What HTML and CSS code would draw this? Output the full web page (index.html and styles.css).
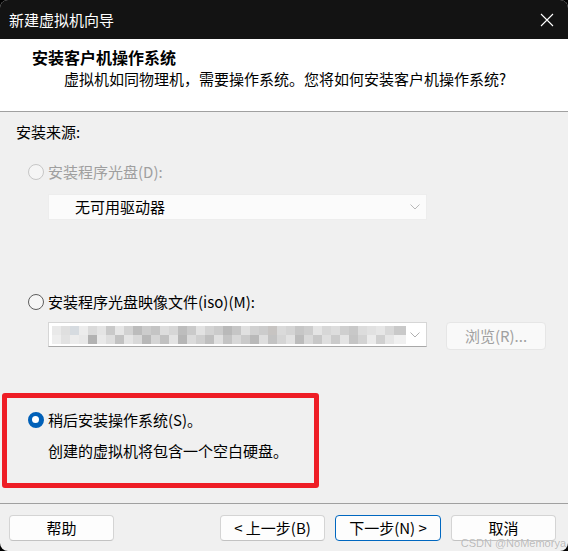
FILE: index.html
```html
<!DOCTYPE html>
<html lang="zh-CN">
<head>
<meta charset="utf-8">
<title>新建虚拟机向导</title>
<link rel="stylesheet" href="styles.css">
</head>
<body>
<div class="window">
  <div class="titlebar">
    <span class="title">新建虚拟机向导</span>
    <svg class="close" width="14" height="14" viewBox="0 0 14 14"><path d="M1 1 L13 13 M13 1 L1 13" stroke="#ffffff" stroke-width="1.1" fill="none"/></svg>
  </div>
  <div class="header">
    <div class="h-title">安装客户机操作系统</div>
    <div class="h-sub">虚拟机如同物理机，需要操作系统。您将如何安装客户机操作系统?</div>
  </div>
  <div class="content">
    <div class="src-label">安装来源:</div>
    <div class="radio-row row-disc disabled">
      <span class="radio radio-off-disabled"></span>
      <span class="rlabel">安装程序光盘(D):</span>
    </div>
    <div class="combo combo-disabled">
      <span class="combo-text">无可用驱动器</span>
      <svg class="chev" width="10" height="6" viewBox="0 0 10 6"><path d="M0.5 0.5 L5 5 L9.5 0.5" stroke="#b8b8b8" stroke-width="1" fill="none"/></svg>
    </div>
    <div class="radio-row row-iso">
      <span class="radio radio-off"></span>
      <span class="rlabel">安装程序光盘映像文件(iso)(M):</span>
    </div>
    <div class="iso-row">
      <div class="combo combo-iso">
        <div class="mosaic"></div>
        <svg class="chev" width="10" height="6" viewBox="0 0 10 6"><path d="M0.5 0.5 L5 5 L9.5 0.5" stroke="#b0b0b0" stroke-width="1" fill="none"/></svg>
      </div>
      <div class="btn btn-disabled browse">浏览(R)...</div>
    </div>
    <div class="redbox">
      <div class="radio-row row-later">
        <span class="radio radio-on"></span>
        <span class="rlabel">稍后安装操作系统(S)。</span>
      </div>
      <div class="later-desc">创建的虚拟机将包含一个空白硬盘。</div>
    </div>
  </div>
  <div class="footer">
    <div class="btn help">帮助</div>
    <div class="btn prev">&lt; 上一步(B)</div>
    <div class="btn next">下一步(N) &gt;</div>
    <div class="btn cancel">取消</div>
    <span class="watermark">CSDN @NoMemorya</span>
  </div>
</div>
</body>
</html>
```

FILE: styles.css
```css
* { box-sizing: border-box; }
html, body { margin: 0; padding: 0; background: #000; }
body {
  font-family: "Noto Sans CJK SC", "Noto Sans", sans-serif;
  font-size: 15px;
  color: #000;
}
.window {
  width: 568px;
  height: 551px;
  display: flex;
  flex-direction: column;
  background: #f0f0f0;
  border-radius: 8px;
  overflow: hidden;
  position: relative;
}
.titlebar {
  height: 39px;
  background: #131313;
  display: flex;
  align-items: center;
  padding-left: 9px;
  padding-right: 14px;
  flex-shrink: 0;
}
.title {
  color: #ffffff;
  font-size: 15px;
  line-height: 20px;
  flex: 1;
}
.close { display: block; }
.header {
  background: #ffffff;
  height: 73px;
  border-bottom: 1px solid #a0a0a0;
  padding-top: 8px;
  flex-shrink: 0;
}
.h-title {
  font-size: 16px;
  font-weight: 700;
  line-height: 20px;
  padding-left: 32px;
}
.h-sub {
  font-size: 15px;
  line-height: 20px;
  padding-left: 64px;
  margin-top: 2px;
}
.content {
  flex: 1;
  padding-top: 10px;
  display: flex;
  flex-direction: column;
  align-items: flex-start;
}
.src-label {
  line-height: 20px;
  padding-left: 16px;
}
.radio-row {
  display: flex;
  align-items: center;
  height: 20px;
  padding-left: 28px;
}
.rlabel { line-height: 20px; margin-left: 4px; }
.disabled .rlabel { color: #9f9f9f; }
.row-disc { margin-top: 20px; }
.row-iso { margin-top: 72px; }
.radio {
  width: 16px;
  height: 16px;
  border-radius: 50%;
  flex-shrink: 0;
  display: block;
}
.radio-off-disabled {
  border: 1px solid #c6c6c6;
  background: #f5f5f5;
}
.radio-off {
  border: 1px solid #5e5e5e;
  background: #f6f6f6;
}
.radio-on {
  background: #0060b8;
  border: 4.5px solid #0060b8;
  position: relative;
}
.radio-on::after {
  content: "";
  position: absolute;
  left: 0;
  top: 0;
  width: 7px;
  height: 7px;
  border-radius: 50%;
  background: #ffffff;
}
.combo {
  position: relative;
  display: flex;
  align-items: center;
  margin-left: 48px;
  width: 379px;
}
.combo-disabled {
  margin-top: 12px;
  height: 26px;
  background: #fbfbfb;
  border: 1px solid #ededed;
}
.combo-text {
  padding-left: 26px;
  line-height: 20px;
}
.chev {
  position: absolute;
  right: 6px;
  top: 50%;
  margin-top: -3px;
}
.iso-row {
  display: flex;
  align-items: flex-start;
  margin-top: 10px;
}
.combo-iso {
  height: 25px;
  background: #ffffff;
  border: 1px solid #d6d6d6;
  border-bottom-color: #a8a8a8;
}
.mosaic {
  margin-left: 3px;
  width: 354px;
  height: 18px;
  background:
    linear-gradient(90deg,
      #e9e9e9 0 9px, #dfdfdf 9px 18px, #d6dbe0 18px 27px, #ececec 27px 36px,
      #dadada 36px 45px, #e4e4e4 45px 54px, #c9c9c9 54px 63px, #e6e6e6 63px 72px,
      #d2d2d2 72px 81px, #bcbcbc 81px 90px, #cccccc 90px 99px, #c4c4c4 99px 108px,
      #dddddd 108px 117px, #d6d6d6 117px 126px, #bdbdbd 126px 135px, #cacaca 135px 144px,
      #e2e2e2 144px 153px, #d3d3d3 153px 162px, #cbcbcb 162px 171px, #b9b9b9 171px 180px,
      #c6c6c6 180px 189px, #e0e0e0 189px 198px, #d1d1d1 198px 207px, #cccccc 207px 216px,
      #c7c4c2 216px 225px, #dadada 225px 234px, #d4d4d4 234px 243px, #c6c6c6 243px 252px,
      #cdcdcd 252px 261px, #e4e4e4 261px 270px, #d7d7d7 270px 279px, #dddddd 279px 288px,
      #cfcfcf 288px 297px, #c8c8c8 297px 306px, #dcdcdc 306px 315px, #e1e1e1 315px 324px,
      #e6e6e6 324px 333px, #d8d8d8 333px 342px, #c9c9c9 342px 354px) top left / 100% 9px no-repeat,
    linear-gradient(90deg,
      #eeeeee 0 9px, #e2e2e2 9px 18px, #ececec 18px 27px, #e8e8e8 27px 36px,
      #b2b2b2 36px 45px, #e9e9e9 45px 54px, #dedede 54px 63px, #c2c2c2 63px 72px,
      #e5e5e5 72px 81px, #d9d9d9 81px 90px, #b8b8b8 90px 99px, #d5d5d5 99px 108px,
      #c1c1c1 108px 117px, #e3e3e3 117px 126px, #b6b6b6 126px 135px, #dbdbdb 135px 144px,
      #cfcfcf 144px 153px, #bfbfbf 153px 162px, #e0e0e0 162px 171px, #c4c4c4 171px 180px,
      #d8d8d8 180px 189px, #cacaca 189px 198px, #b9b9b9 198px 207px, #dedede 207px 216px,
      #c3c3c3 216px 225px, #d5d5d5 225px 234px, #e2e2e2 234px 243px, #bcbcbc 243px 252px,
      #d9d9d9 252px 261px, #c8c8c8 261px 270px, #dfdfdf 270px 279px, #cbcbcb 279px 288px,
      #e4e4e4 288px 297px, #c5c5c5 297px 306px, #d3d3d3 306px 315px, #ebebeb 315px 324px,
      #d0d0d0 324px 333px, #e6e6e6 333px 342px, #f0f0f0 342px 354px) bottom left / 100% 9px no-repeat;
}
.btn {
  height: 26px;
  width: 105px;
  display: flex;
  align-items: center;
  justify-content: center;
  background: #fdfdfd;
  border: 1px solid #d4d4d4;
  border-bottom-color: #c2c2c2;
  border-radius: 4px;
  line-height: 18px;
  font-size: 15px;
}
.btn-disabled {
  color: #a0a0a0;
  background: #f9f9f9;
  border-color: #e6e6e6;
}
.browse {
  margin-left: 19px;
  width: 100px;
  height: 28px;
}
.redbox {
  margin-top: 43px;
  margin-left: 2px;
  width: 317px;
  height: 95px;
  border: 5px solid #ee1d25;
  border-radius: 3px;
  padding-top: 12px;
}
.row-later { padding-left: 21px; }
.later-desc {
  margin-top: 11px;
  padding-left: 41px;
  line-height: 20px;
}
.footer {
  flex-shrink: 0;
  height: 48px;
  border-top: 1px solid #a0a0a0;
  display: flex;
  align-items: flex-start;
  padding: 11px 12px 0 9px;
  gap: 10px;
  position: relative;
}
.prev { margin-left: auto; }
.next {
  width: 106px;
  border: 1px solid #0067c0;
}
.watermark {
  position: absolute;
  right: 2px;
  bottom: 2px;
  font-family: "Liberation Sans", Arial, sans-serif;
  font-size: 11px;
  line-height: 11px;
  color: rgba(165, 165, 165, 0.75);
  text-shadow: 0 0 1px rgba(255,255,255,0.8);
}
```
